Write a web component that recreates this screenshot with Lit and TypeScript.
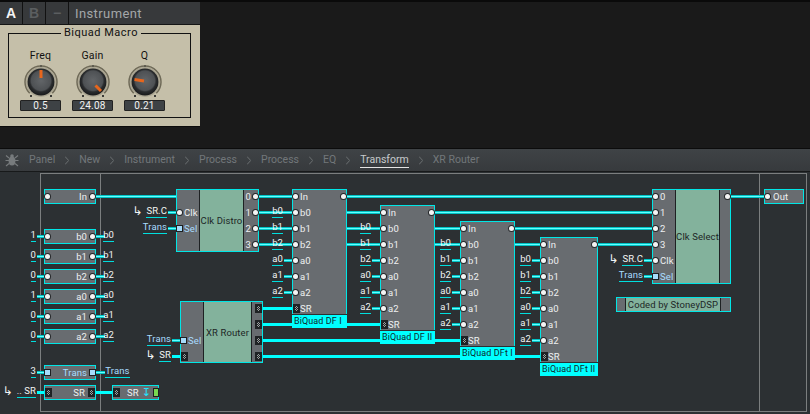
import { LitElement, html, css, svg } from "lit";
import { customElement } from "lit/decorators.js";

type P = "dot" | "sq" | "grid" | "";
const H = 172; // page y at which the canvas begins

const port = (k: P) => (k ? html`<span class="p ${k}"></span>` : html`<span class="p none"></span>`);

const box = (x: number, y: number, w: number, h: number) =>
  `left:${x}px;top:${y - H}px;width:${w}px;height:${h}px`;

const BQ_NAMES = ["b0", "b1", "b2", "a0", "a1", "a2"];
const BIQUADS = [
  { n: "BiQuad DF I", x: 292, y: 189, w: 55 },
  { n: "BiQuad DF II", x: 380, y: 205, w: 55 },
  { n: "BiQuad DFt I", x: 460, y: 221, w: 55 },
  { n: "BiQuad DFt II", x: 540, y: 237, w: 58 },
];
const MACROS: [string, string, number][] = [
  ["1", "b0", 229],
  ["0", "b1", 249],
  ["0", "b2", 269],
  ["1", "a0", 289],
  ["0", "a1", 309],
  ["0", "a2", 329],
];

interface Ext { t: string; end: number; y: number; arrow?: boolean; blue?: boolean }
const EXTS: Ext[] = [
  ...MACROS.map(([v, , y]) => ({ t: v, end: 36, y: y + 7.5 })),
  ...MACROS.map(([, n, y]) => ({ t: n, end: 114, y: y + 7.5 })),
  { t: "3", end: 36, y: 372.5 },
  { t: "Trans", end: 129.5, y: 372.5, blue: true },
  { t: ".. SR", end: 36, y: 392.5, arrow: true },
  { t: "SR.C", end: 167, y: 212.5, arrow: true },
  { t: "Trans", end: 167, y: 228.5, blue: true },
  { t: "SR.C", end: 643, y: 260.5, arrow: true },
  { t: "Trans", end: 643, y: 276.5, blue: true },
  { t: "Trans", end: 171, y: 340.5, blue: true },
  { t: "SR", end: 171, y: 356.5, arrow: true },
  ...BIQUADS.flatMap((b) =>
    BQ_NAMES.map((t, i) => ({ t, end: b.x - 9, y: b.y + 7.5 + 16 * (i + 1) }))
  ),
];

const THIN: [number, number, number][] = [
  [93, 196.5, 179], [256, 196.5, 295], [256, 212.5, 383], [256, 228.5, 463], [256, 244.5, 543],
  [344, 196.5, 655], [432, 212.5, 655], [512, 228.5, 655], [596, 244.5, 655], [728, 196.5, 767],
  ...MACROS.flatMap(([, , y]): [number, number, number][] => [[37, y + 7.5, 46], [93, y + 7.5, 105]]),
  [37, 372.5, 46], [93, 372.5, 105], [168, 212.5, 179], [168, 228.5, 179], [644, 260.5, 655], [644, 276.5, 655],
  [172, 340.5, 183],
  ...BIQUADS.flatMap((b) =>
    BQ_NAMES.map((_, i): [number, number, number] => [b.x - 8, b.y + 7.5 + 16 * (i + 1), b.x + 3])
  ),
];
const THICK: [number, number, number][] = [
  [37, 392.5, 48], [93, 392.5, 115], [172, 356.5, 183],
  [260, 308.5, 295], [260, 324.5, 383], [260, 340.5, 463], [260, 356.5, 543],
];
const FRAME = [
  [40, 173.5, 806.5, 173.5], [40, 411.5, 806.5, 411.5], [40.5, 173, 40.5, 412], [100.5, 173, 100.5, 412],
  [759.5, 173, 759.5, 412], [806.5, 173, 806.5, 412],
];

const knob = (x1: number, y1: number, x2: number, y2: number) => html`
  <svg class="knob" width="44" height="38" viewBox="0 0 44 38">
    <defs>
      <radialGradient id="kb" cx="50%" cy="45%" r="55%">
        <stop offset="0" stop-color="#626568" /><stop offset="0.66" stop-color="#4e5154" />
        <stop offset="0.76" stop-color="#2a2c2e" /><stop offset="1" stop-color="#18191a" />
      </radialGradient>
    </defs>
    <circle cx="22" cy="19" r="15" fill="#a9a491" />
    <path d="M10.7 30.3 A16 16 0 1 1 33.3 30.3" fill="none" stroke="#6f6a58" stroke-width="1.5" />
    <path d="M22 2v2" stroke="#3a3a36" stroke-width="1" />
    <circle cx="22" cy="19" r="13.4" fill="url(#kb)" />
    <rect x="11" y="32" width="2" height="2" fill="#3a3a36" />
    <rect x="31" y="32" width="2" height="2" fill="#3a3a36" />
    <line x1=${x1} y1=${y1} x2=${x2} y2=${y2} stroke="#e8661c" stroke-width="3" />
  </svg>`;

const bug = html`<svg class="bug" width="14" height="14" viewBox="0 0 14 14">
  <ellipse cx="7" cy="8" rx="3.4" ry="4.6" fill="#777b7d" />
  <circle cx="7" cy="3" r="1.8" fill="#777b7d" />
  <path d="M1 2.5 4 5M13 2.5 10 5M0.5 7.5H4M13.5 7.5H10M1 13 4 10.5M13 13 10 10.5" stroke="#777b7d" stroke-width="1.1" fill="none" />
</svg>`;

const chevron = html`<svg class="chev" width="4" height="9" viewBox="0 0 4 9"><path d="M0 0.5 3.7 4.5 0 8.5" fill="none" stroke="#6c7072" /></svg>`;

@customElement("app-root")
export class AppRoot extends LitElement {
  static styles = css`
    :host { display: block; width: 810px; height: 414px; overflow: hidden; font-family: Roboto, "Liberation Sans", sans-serif; background: #1a1a1a; }
    .top { height: 148px; box-sizing: border-box; border-top: 2px solid #0a0a0a; display: flex; background: #1a1a1a; }
    .inst { width: 200px; display: flex; flex-direction: column; }
    .tabs { height: 23px; box-sizing: border-box; background: #37393b; display: flex; align-items: center; border-bottom: 1px solid #141414; flex: none; }
    .tab { width: 22px; height: 22px; border-right: 1px solid #111; font-family: "Liberation Sans", sans-serif; font-weight: bold; font-size: 14px; line-height: 22px; text-align: center; color: #5b5e60; }
    .tab.on { color: #f4f4f4; }
    .title { margin-left: 6px; font-size: 13px; color: #a3a7a9; letter-spacing: 0.4px; }
    .panel { height: 102px; background: #c5bfa9; padding: 8px 0 0 8px; box-sizing: border-box; border-bottom: 1px solid #0c0c0c; }
    .group { position: relative; width: 183px; height: 85px; box-sizing: border-box; border: 1px solid #111; padding: 16px 0 0 5.5px; display: flex; }
    .gtitle { position: absolute; left: 52px; top: -7px; padding: 0 3px; background: #c5bfa9; font-size: 11px; line-height: 12px; letter-spacing: 0.5px; color: #111; }
    .kcol { width: 52px; display: flex; flex-direction: column; align-items: center; }
    .klabel { font-size: 10.5px; line-height: 12px; color: #111; letter-spacing: 0.2px; }
    .knob { display: block; margin-top: 1px; }
    .val { width: 41px; height: 11px; margin-top: -1px; box-sizing: border-box; background: #3e4245; border: 1px solid #222; color: #f2f2f2; font-size: 10px; line-height: 9px; text-align: center; border-radius: 1px; letter-spacing: 0.2px; }

    .crumbs { height: 24px; box-sizing: border-box; background: linear-gradient(#3f4346, #373a3d); border-top: 1px solid #0c0c0c; border-bottom: 1px solid #17191a; display: flex; align-items: center; gap: 10px; padding-left: 5px; font-size: 10.5px; color: #72777a; }
    .crumbs span.a { height: 15px; line-height: 14px; box-sizing: border-box; }
    .crumbs span.cur { color: #c6cacc; border-bottom: 1px solid #e4e4e4; }
    .canvas { position: relative; height: 242px; background: #2c3033; overflow: hidden; }
    .lines { position: absolute; left: 0; top: 0; }

    .m { position: absolute; box-sizing: border-box; border: 1px solid #00e6e6; background: #686c70; color: #eef0f0; font-size: 9.5px; letter-spacing: 0.1px; display: flex; }
    .rows { display: flex; flex-direction: column; margin-top: -1px; flex: 1; min-width: 0; }
    .r { height: 16px; flex: none; display: flex; align-items: flex-start; gap: 2px; line-height: 15px; white-space: nowrap; }
    .m.io .r { height: 13px; }
    .m.io { align-items: flex-start; }
    .sp { flex: 1; }
    .blue { color: #a9dcff; }
    .p { flex: none; display: block; width: 5px; height: 5px; margin-top: 5px; }
    .p.dot { background: #f4f4f4; border-radius: 50%; box-shadow: 0 0 0 1px #26292b; }
    .p.sq { background: #a6dcfb; box-shadow: 0 0 0 1px #1d2022; }
    .p.grid { width: 3px; height: 5px; margin-top: 3px; padding: 2px; background: repeating-conic-gradient(#9aa0a0 0 25%, transparent 0 50%) content-box 0 0 / 2px 2px, #1f2224; }
    .p.none { width: 0; }
    .io .p { margin-top: 4px; }
    .io .p.grid { margin-top: 2px; }
    .io .t { margin-left: auto; margin-right: 1px; line-height: 13px; }
    .io .r span { line-height: 13px; }
    .green { background: #83b29c; color: #1d2626; border-left: 1px solid #1e2123; border-right: 1px solid #1e2123; display: flex; align-items: center; justify-content: center; font-size: 9.5px; white-space: nowrap; box-sizing: border-box; flex: none; letter-spacing: 0.1px; }
    .col { flex: none; display: flex; flex-direction: column; margin-top: -1px; }
    .col.right .r { justify-content: flex-end; }
    .bq { position: absolute; display: flex; flex-direction: column; }
    .bq .m { position: static; border-bottom: 0; flex: none; }
    .bqlabel { margin-top: 1px; height: 13px; background: #00ffff; color: #0f2a2c; font-size: 9px; line-height: 12px; padding-left: 2px; white-space: nowrap; box-sizing: border-box; flex: none; letter-spacing: 0.1px; }
    .ext { position: absolute; display: flex; gap: 4px; color: #f2f4f4; font-size: 9.5px; letter-spacing: 0.1px; line-height: 12px; white-space: nowrap; }
    .ext .u { border-bottom: 1px solid #00dede; height: 12px; display: block; }
    .ext .ar { font-family: "DejaVu Sans", sans-serif; font-size: 12px; }
    .ext.blue { color: #a9dcff; }
    .led { width: 4px; height: 7px; background: #79d84f; border: 1px solid #1c1f20; flex: none; margin: 2px 0 0 2px; }
    .down { color: #22e4ff; font-family: "DejaVu Sans", sans-serif; font-size: 11px; margin-left: 3px; }
  `;

  private io(x: number, y: number, l: P, t: string, r: P, cls = "") {
    return html`<div class="m io" style=${box(x, y, 52, 15)}>
      <div class="rows" style="margin-top:0"><div class="r">${port(l)}<span class="t ${cls}">${t}</span>${port(r)}</div></div>
    </div>`;
  }

  private clkDistro() {
    return html`<div class="m" style=${box(176, 189, 83, 63)}>
      <div class="col" style="width:22px">
        <div class="r"></div>
        <div class="r">${port("dot")}<span>Clk</span></div>
        <div class="r">${port("sq")}<span class="blue">Sel</span></div>
      </div>
      <div class="green" style="width:45px">Clk Distro</div>
      <div class="col right" style="width:14px">
        ${["0", "1", "2", "3"].map((n) => html`<div class="r"><span>${n}</span>${port("dot")}</div>`)}
      </div>
    </div>`;
  }

  private clkSelect() {
    return html`<div class="m" style=${box(652, 189, 79, 95)}>
      <div class="col" style="width:22px">
        ${["0", "1", "2", "3", "Clk"].map((n) => html`<div class="r">${port("dot")}<span>${n}</span></div>`)}
        <div class="r">${port("sq")}<span class="blue">Sel</span></div>
      </div>
      <div class="green" style="width:45px">Clk Select</div>
      <div class="col right" style="width:10px">
        <div class="r">${port("dot")}</div>
      </div>
    </div>`;
  }

  private xrRouter() {
    return html`<div class="m" style=${box(180, 301, 83, 62)}>
      <div class="col" style="width:22px">
        <div class="r"></div>
        <div class="r"></div>
        <div class="r">${port("sq")}<span class="blue">Sel</span></div>
        <div class="r">${port("grid")}</div>
      </div>
      <div class="green" style="width:49px">XR Router</div>
      <div class="col right" style="width:10px">
        ${[0, 1, 2, 3].map(() => html`<div class="r">${port("grid")}</div>`)}
      </div>
    </div>`;
  }

  private biquad(b: { n: string; x: number; y: number; w: number }) {
    return html`<div class="bq" style=${box(b.x, b.y, b.w, 139)}>
      <div class="m" style="height:125px">
        <div class="rows">
          <div class="r">${port("dot")}<span>In</span><span class="sp"></span>${port("dot")}</div>
          ${BQ_NAMES.map((n) => html`<div class="r">${port("dot")}<span>${n}</span></div>`)}
          <div class="r" style="gap:0">${port("grid")}<span>SR</span></div>
        </div>
      </div>
      <div class="bqlabel">${b.n}</div>
    </div>`;
  }

  render() {
    const crumbs = ["Panel", "New", "Instrument", "Process", "Process", "EQ", "Transform", "XR Router"];
    return html`
      <div class="top">
        <div class="inst">
          <div class="tabs">
            <div class="tab on">A</div><div class="tab">B</div><div class="tab">−</div>
            <div class="title">Instrument</div>
          </div>
          <div class="panel">
            <div class="group">
              <div class="gtitle">Biquad Macro</div>
              <div class="kcol"><div class="klabel">Freq</div>${knob(22, 7, 22, 15)}<div class="val">0.5</div></div>
              <div class="kcol"><div class="klabel">Gain</div>${knob(24.5, 22.5, 30, 28)}<div class="val">24.08</div></div>
              <div class="kcol"><div class="klabel">Q</div>${knob(11.5, 16.5, 21, 18)}<div class="val">0.21</div></div>
            </div>
          </div>
        </div>
      </div>
      <div class="crumbs">
        ${bug}
        ${crumbs.map(
          (c, i) => html`${i > 0 ? chevron : ""}<span class="a ${c === "Transform" ? "cur" : ""}">${c}</span>`
        )}
      </div>
      <div class="canvas">
        <svg class="lines" width="810" height="242" viewBox="0 ${H} 810 242">
          ${FRAME.map(([a, b, c, d]) => svg`<line x1=${a} y1=${b} x2=${c} y2=${d} stroke="#7b7e7f" />`)}
          ${THIN.map(([a, y, b]) => svg`<line x1=${a} y1=${y} x2=${b} y2=${y} stroke="#00c4c6" stroke-width="3" />`)}
          ${THIN.map(([a, y, b]) => svg`<line x1=${a} y1=${y} x2=${b} y2=${y} stroke="#6ff" stroke-width="1" />`)}
          ${THICK.map(([a, y, b]) => svg`<line x1=${a} y1=${y} x2=${b} y2=${y} stroke="#00ffff" stroke-width="3" />`)}
        </svg>

        ${this.io(44, 189, "dot", "In", "dot")}
        ${MACROS.map(([, n, y]) => this.io(44, y, "dot", n, "dot"))}
        ${this.io(44, 365, "sq", "Trans", "sq", "blue")}
        ${this.io(44, 385, "grid", "SR", "grid")}
        <div class="m io" style=${box(112, 385, 47, 15)}>
          <div class="rows" style="margin-top:0">
            <div class="r" style="gap:0">${port("grid")}<span style="margin-left:7px">SR</span><span class="down">↧</span><span class="led"></span></div>
          </div>
        </div>
        <div class="m io" style=${box(764, 189, 40, 15)}>
          <div class="rows" style="margin-top:0"><div class="r" style="gap:3px">${port("dot")}<span>Out</span></div></div>
        </div>
        ${this.clkDistro()} ${this.xrRouter()} ${BIQUADS.map((b) => this.biquad(b))} ${this.clkSelect()}
        <div class="m" style=${box(616, 297, 115, 15)}>
          <div class="green" style="width:96px;margin-left:8px;height:13px">Coded by StoneyDSP</div>
        </div>
        ${EXTS.map(
          (e) => html`<div class="ext ${e.blue ? "blue" : ""}" style="right:${810 - e.end}px;top:${e.y - 7.5 - H}px">
            ${e.arrow ? html`<span class="ar">↳</span>` : ""}<span class="u">${e.t}</span>
          </div>`
        )}
      </div>
    `;
  }
}
